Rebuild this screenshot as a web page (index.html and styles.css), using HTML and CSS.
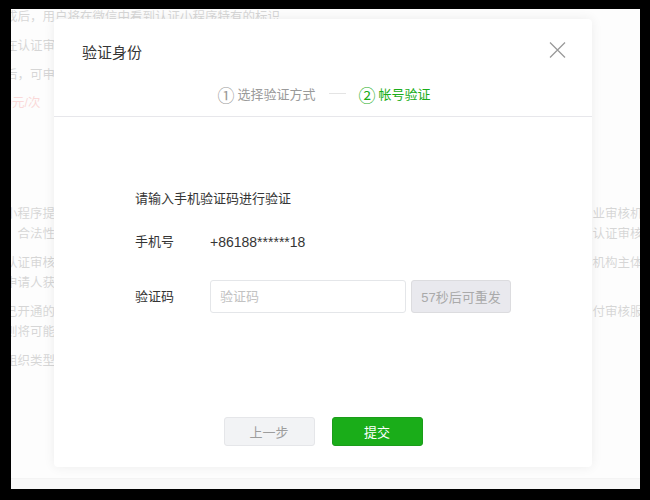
FILE: index.html
```html
<!DOCTYPE html>
<html lang="zh-CN">
<head>
    <meta charset="UTF-8">
    <meta name="viewport" content="width=device-width, initial-scale=1.0">
    <title>验证身份</title>
    <link rel="stylesheet" href="styles.css">
</head>
<body>
    <div class="page">
        <div class="page-body">
            <div class="notice">
                <p>成后，用户将在微信中看到认证小程序特有的标识</p>
                <p>在认证审核期间，请保持联系方式畅通</p>
                <p>后，可申请修改小程序名称</p>
                <p class="price">0元/次</p>
            </div>
            <div class="section">
                <p>小程序提交认证申请后，将由第三方审核机构对申请主体的资质真实性与合法性进行审核，并交由具备的专业审核机构<br>，合法性及有效性。审核机构将在规定时间内完成审核，并将结果通知申请人，申请人也可在后台查看进度认证审核结果</p>
                <p>认证审核期间，平台可能会要求申请人补充相关材料，请申请人及时关注通知并配合完成审核，审核机构对机构主体资料<br>申请人获得认证后即可使用相关能力</p>
                <p>已开通的小程序在认证通过后可享受更多的接口能力与服务，相关费用将由第三方审核机构收取，申请人需付审核服务费<br>则将可能影响小程序的正常使用</p>
                <p>组织类型为个体工商户的申请人请提供营业执照</p>
            </div>
        </div>
        <div class="page-footer"></div>

        <div class="mask">
            <div class="dialog">
                <div class="dialog-hd">
                    <div class="dialog-title-row">
                        <h3 class="dialog-title">验证身份</h3>
                        <a class="dialog-close" href="javascript:;">
                            <svg width="17" height="16" viewBox="0 0 17 16">
                                <path d="M1 0.5 L16 15.5 M16 0.5 L1 15.5" stroke="#9a9a9a" stroke-width="1.3" fill="none"/>
                            </svg>
                        </a>
                    </div>
                    <div class="steps">
                        <span class="step"><span class="step-num">①</span>选择验证方式</span>
                        <span class="step-line"></span>
                        <span class="step step-current"><span class="step-num">②</span>帐号验证</span>
                    </div>
                </div>
                <div class="dialog-bd">
                    <div class="form">
                        <p class="form-tips">请输入手机验证码进行验证</p>
                        <div class="form-row">
                            <label class="form-label">手机号</label>
                            <span class="form-value">+86188******18</span>
                        </div>
                        <div class="form-row form-row-code">
                            <label class="form-label">验证码</label>
                            <input class="form-input" type="text" placeholder="验证码">
                            <button class="btn-resend" disabled>57秒后可重发</button>
                        </div>
                    </div>
                </div>
                <div class="dialog-ft">
                    <button class="btn btn-default">上一步</button>
                    <button class="btn btn-primary">提交</button>
                </div>
            </div>
        </div>
    </div>
</body>
</html>
```

FILE: styles.css
```css
body {
    margin: 0;
    padding: 9px 0 0 11px;
    background: #000;
    font-family: "Liberation Sans", "Noto Sans CJK SC", sans-serif;
    color: #353535;
}

p {
    margin: 0;
}

.page {
    position: relative;
    width: 629px;
    height: 480px;
    overflow: hidden;
    background: #f2f2f2;
    display: flex;
    flex-direction: column;
}

.page-body {
    flex: 1;
    margin: -3px 0 0 -6px;
    font-family: "Noto Sans CJK SC", sans-serif;
    font-size: 12.5px;
    line-height: 20px;
    white-space: nowrap;
}

.notice p {
    margin-bottom: 9px;
}

.notice p:nth-child(2) {
    margin-top: 2px;
}

.notice .price {
    font-family: "Liberation Sans", "Noto Sans CJK SC", sans-serif;
    color: #e64340;
}

.section {
    margin-top: 90px;
}

.section p {
    margin-bottom: 9px;
}

.page-footer {
    height: 10px;
    background: #dcdcdc;
    border-top: 1px solid #c8c8c8;
}

/* dialog */
.mask {
    position: absolute;
    top: 0;
    left: 0;
    right: 0;
    bottom: 0;
    background: rgba(255, 255, 255, 0.8);
    padding: 10px 0 0 43px;
}

.dialog {
    width: 538px;
    height: 448px;
    background: #fff;
    border-radius: 4px;
    box-shadow: 0 0 12px rgba(0, 0, 0, 0.07);
    display: flex;
    flex-direction: column;
}

.dialog-hd {
    padding: 20px 26px 11px 28px;
    border-bottom: 1px solid #e7e7eb;
}

.dialog-title-row {
    display: flex;
    justify-content: space-between;
    align-items: center;
    height: 24px;
}

.dialog-title {
    margin: 0;
    font-size: 15px;
    font-weight: normal;
    color: #353535;
}

.dialog-close {
    display: flex;
    margin-top: -2px;
}

.steps {
    display: flex;
    justify-content: center;
    align-items: center;
    margin-top: 20px;
    height: 20px;
    margin-bottom: 2px;
    font-size: 13px;
}

.step {
    display: flex;
    align-items: center;
    color: #9a9a9a;
}

.step-num {
    font-size: 17px;
    line-height: 20px;
    padding-top: 8px;
    margin-right: 3px;
}

.step-current {
    color: #1aad19;
}

.step-line {
    width: 17px;
    height: 1px;
    background: #e4e4e4;
    margin: 0 13px;
}

.dialog-bd {
    padding-top: 72px;
}

.form {
    width: 376px;
    margin: 0 auto;
    font-size: 13px;
    line-height: 20px;
}

.form-tips {
    margin-bottom: 23px;
}

.form-row {
    display: flex;
    align-items: center;
    margin-bottom: 28px;
}

.form-label {
    width: 75px;
}

.form-value {
    font-size: 14px;
}

.form-input {
    box-sizing: border-box;
    width: 196px;
    height: 33px;
    padding: 0 9px;
    border: 1px solid #e4e6e9;
    border-radius: 3px;
    font-family: inherit;
    font-size: 13px;
    color: #353535;
    outline: none;
}

.form-input::placeholder {
    color: #c2c2c2;
}

.btn-resend {
    box-sizing: border-box;
    width: 100px;
    height: 33px;
    margin-left: 5px;
    background: #e9e9ee;
    border: 1px solid #dcdcdf;
    border-radius: 3px;
    font-family: inherit;
    font-size: 13px;
    color: #aaaaaa;
}

.dialog-ft {
    margin-top: auto;
    padding-bottom: 21px;
    display: flex;
    justify-content: center;
    gap: 17px;
}

.btn {
    box-sizing: border-box;
    width: 91px;
    height: 29px;
    border-radius: 3px;
    font-family: inherit;
    font-size: 13px;
    cursor: pointer;
}

.btn-default {
    background: #f2f3f5;
    border: 1px solid #e5e6e9;
    color: #9d9d9d;
}

.btn-primary {
    background: #1aad19;
    border: 1px solid #1b9c1a;
    color: #fff;
}
```
